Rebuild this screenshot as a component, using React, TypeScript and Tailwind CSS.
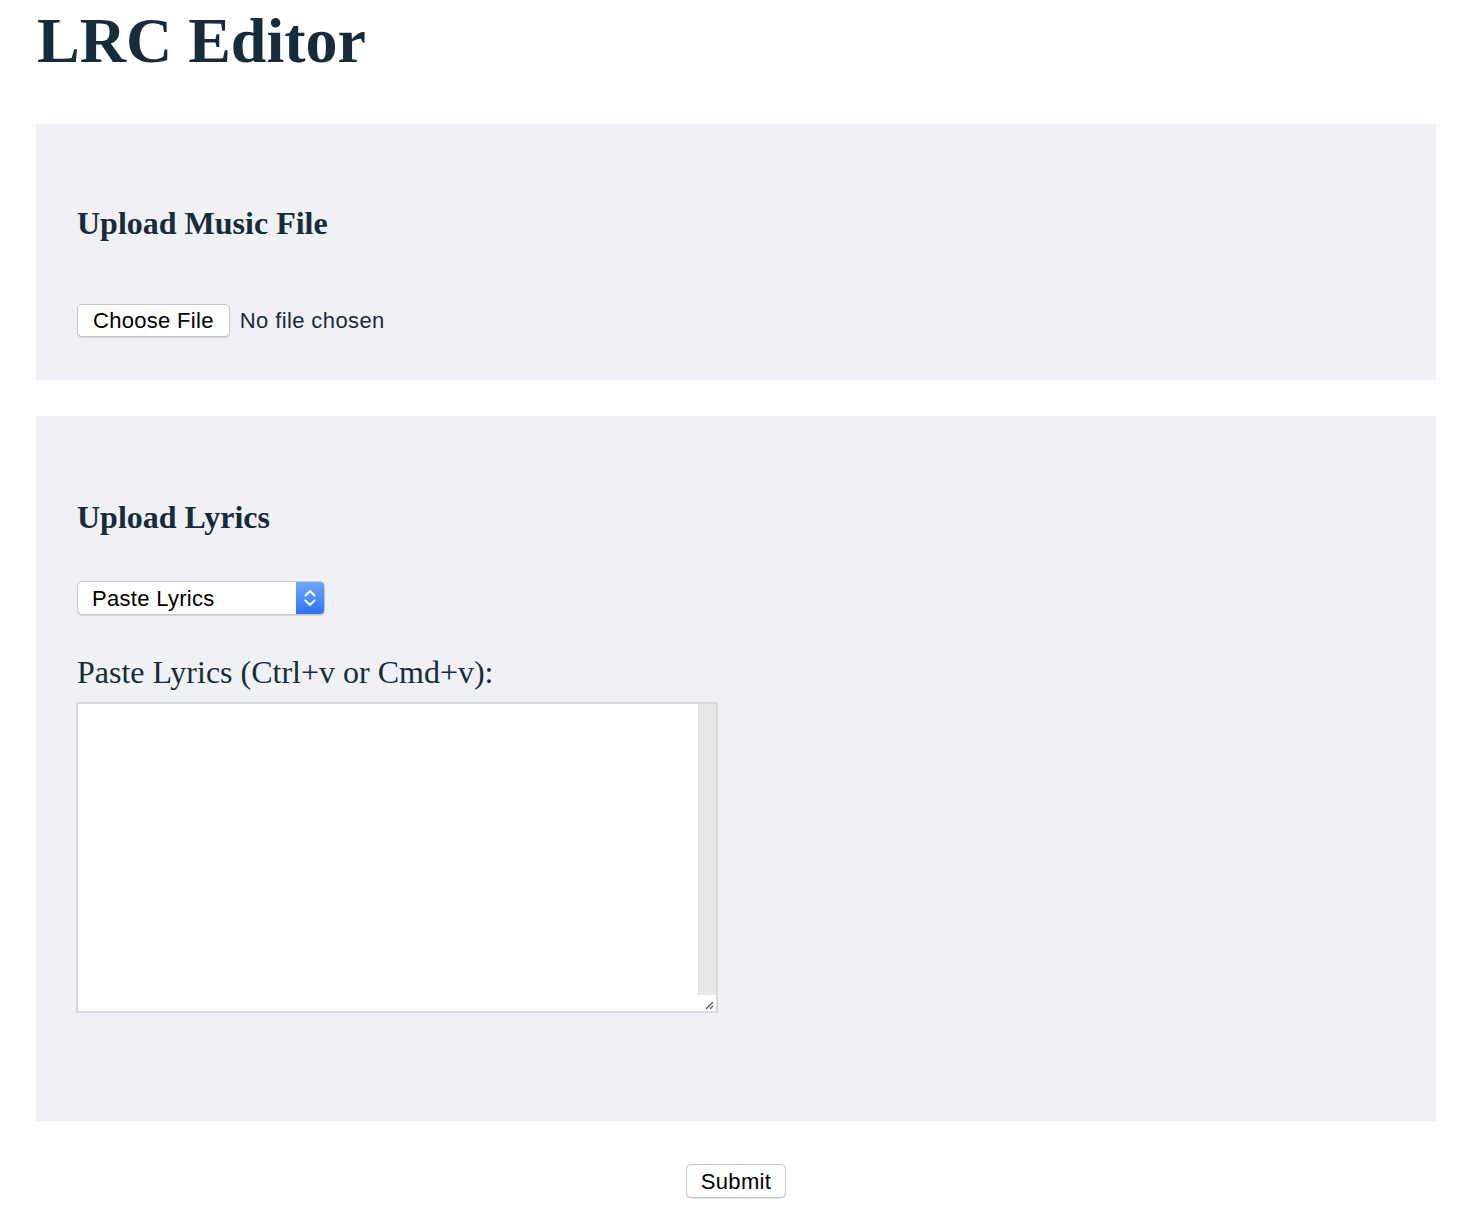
import React, { useState } from 'react';

const serif = "font-['Liberation_Serif','Times_New_Roman',serif]";
const sans = "font-['Liberation_Sans',Arial,sans-serif]";

const App: React.FC = () => {
  const [mode, setMode] = useState('paste');
  const [lyrics, setLyrics] = useState('');

  return (
    <div className={`min-h-screen bg-white px-[36px] text-[#172c3a] ${serif}`}>
      <h1 className="mt-[9px] mb-[51px] pl-px text-[64px] font-bold leading-[64px]">LRC Editor</h1>

      {/* Music file */}
      <section className="bg-[#f0f1f6] pl-[41px] pt-[83px] pb-[43px]">
        <h2 className="text-[32px] font-bold leading-[32px]">Upload Music File</h2>
        <div className={`mt-[65px] flex items-center ${sans}`}>
          <label className="flex h-[33px] cursor-pointer items-center rounded-[5px] border border-[#c6c6c6] bg-white px-[15px] text-[22px] tracking-[0.3px] text-black shadow-[0_1px_1px_rgba(0,0,0,0.12)]">
            Choose File
            <input type="file" accept="audio/*" className="hidden" />
          </label>
          <span className="ml-[10px] text-[22px] tracking-[0.4px] text-[#172c3a]">No file chosen</span>
        </div>
      </section>

      {/* Lyrics */}
      <section className="mt-[36px] bg-[#f0f1f6] pl-[41px] pt-[85px] pb-[108px]">
        <h2 className="text-[32px] font-bold leading-[32px]">Upload Lyrics</h2>

        <div className="mt-[48px] flex h-[34px] w-[248px] overflow-hidden rounded-[5px] border border-[#c6c6c6] bg-white shadow-[0_1px_1px_rgba(0,0,0,0.12)]">
          <select
            value={mode}
            onChange={(e) => setMode(e.target.value)}
            className={`flex-1 appearance-none bg-transparent pl-[14px] text-[22px] tracking-[0.3px] text-black outline-none ${sans}`}
          >
            <option value="paste">Paste Lyrics</option>
            <option value="file">Upload File</option>
          </select>
          <div className="flex w-[28px] items-center justify-center bg-gradient-to-b from-[#6da8fb] to-[#2e72f5]">
            <svg width="14" height="20" viewBox="0 0 14 20" fill="none" stroke="white" strokeWidth="2" strokeLinecap="round" strokeLinejoin="round">
              <path d="M2.5 7.5 7 3l4.5 4.5" />
              <path d="M2.5 12.5 7 17l4.5-4.5" />
            </svg>
          </div>
        </div>

        <p className="mt-[41px] text-[32px] leading-[32px]">Paste Lyrics (Ctrl+v or Cmd+v):</p>

        <div className="-ml-px mt-[14px] flex h-[311px] w-[642px] border-2 border-[#dadada] bg-white">
          <textarea
            value={lyrics}
            onChange={(e) => setLyrics(e.target.value)}
            className={`h-full flex-1 resize-none p-1 text-[16px] outline-none ${sans}`}
          />
          <div className="flex w-[18px] flex-col">
            <div className="flex-1 border-l border-[#e0e0e0] bg-[#e8e8e8]" />
            <div className="flex h-[16px] items-end justify-end bg-white pb-[1px] pr-[2px]">
              <svg width="10" height="10" viewBox="0 0 10 10" stroke="#555" strokeWidth="1.2">
                <path d="M2 9 9 2" />
                <path d="M6 9 9 6" />
              </svg>
            </div>
          </div>
        </div>
      </section>

      <div className="mt-[43px] flex justify-center pb-[32px]">
        <button
          className={`h-[34px] rounded-[5px] border border-[#c6c6c6] bg-white px-[14px] text-[22px] tracking-[0.3px] text-black shadow-[0_1px_1px_rgba(0,0,0,0.12)] ${sans}`}
        >
          Submit
        </button>
      </div>
    </div>
  );
};

export default App;
